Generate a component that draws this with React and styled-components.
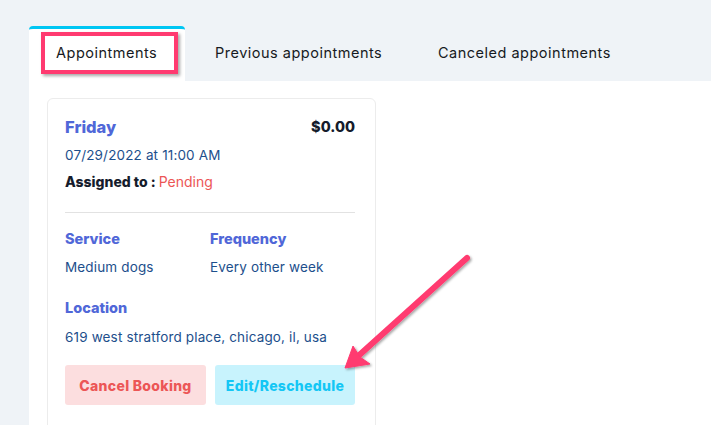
import React from 'react';
import styled, { createGlobalStyle } from 'styled-components';

const GlobalStyle = createGlobalStyle`
  html, body {
    margin: 0;
    padding: 0;
    background: #eff3f7;
    font-family: 'Inter', 'Open Sans', sans-serif;
  }
`;

const Page = styled.div`
  position: relative;
  width: 711px;
  height: 425px;
  overflow: hidden;
  padding: 26px 0 0 29px;
  box-sizing: border-box;
`;

const TabBar = styled.div`
  display: flex;
  height: 55px;
`;

const Tab = styled.div`
  box-sizing: border-box;
  width: ${(p) => p.$width || 'auto'};
  padding-left: ${(p) => p.$pl || 27}px;
  padding-bottom: 6px;
  display: flex;
  align-items: center;
  font-size: 14.5px;
  letter-spacing: 0.5px;
  color: #161a22;
  background: ${(p) => (p.$active ? '#fff' : 'transparent')};
  border-top: 3px solid ${(p) => (p.$active ? '#00c6f3' : 'transparent')};
  border-radius: 4px 4px 0 0;
`;

const Highlight = styled.div`
  position: absolute;
  left: 41px;
  top: 32px;
  width: 137px;
  height: 42px;
  box-sizing: border-box;
  border: 4px solid #ff3a70;
  box-shadow: 2px 2px 3px rgba(0, 0, 0, 0.35);
`;

const Panel = styled.div`
  background: #fff;
  height: 100%;
  padding: 17px 18px 0;
  box-sizing: border-box;
`;

const Card = styled.div`
  width: 329px;
  height: 340px;
  box-sizing: border-box;
  border: 1px solid #ececec;
  border-radius: 6px;
  padding: 18px 20px 0 17px;
`;

const HeadRow = styled.div`
  display: flex;
  justify-content: space-between;
  align-items: center;
  line-height: 20px;
`;

const Day = styled.div`
  font-size: 16.5px;
  font-weight: 800;
  color: #5067d8;
`;

const Price = styled.div`
  font-size: 14.5px;
  font-weight: 800;
  color: #151c2c;
`;

const Text = styled.div`
  font-size: 13.5px;
  line-height: 20px;
  letter-spacing: 0.15px;
  color: #1d4f8c;
  margin-top: ${(p) => p.$mt || 0}px;
`;

const Assigned = styled.div`
  font-size: 14px;
  line-height: 20px;
  margin-top: 7px;
  color: #151c2c;
  font-weight: 800;
  span {
    font-weight: 400;
    color: #ec5656;
  }
`;

const Divider = styled.div`
  height: 1px;
  background: #e2e2e2;
  margin-top: 20px;
`;

const Grid = styled.div`
  display: grid;
  grid-template-columns: 145px 1fr;
  margin-top: ${(p) => p.$mt || 0}px;
`;

const Label = styled.div`
  font-size: 14.5px;
  font-weight: 800;
  line-height: 20px;
  color: #5067d8;
  margin-top: ${(p) => p.$mt || 0}px;
`;

const Buttons = styled.div`
  display: grid;
  grid-template-columns: 141px 140px;
  gap: 9px;
  margin-top: 18px;
`;

const Button = styled.button`
  height: 40px;
  border: none;
  border-radius: 3px;
  font-family: inherit;
  font-size: 14px;
  font-weight: 800;
  letter-spacing: 0.3px;
  background: ${(p) => (p.$danger ? '#fcdedf' : '#c8f3fd')};
  color: ${(p) => (p.$danger ? '#ec5656' : '#14c7f5')};
  padding: 0;
`;

const Overlay = styled.svg`
  position: absolute;
  left: 0;
  top: 0;
  pointer-events: none;
`;

export default function App() {
  return (
    <>
      <GlobalStyle />
      <Page>
        <TabBar>
          <Tab $active $width="156px">Appointments</Tab>
          <Tab $width="226px" $pl={30}>Previous appointments</Tab>
          <Tab>Canceled appointments</Tab>
        </TabBar>
        <Panel>
          <Card>
            <HeadRow>
              <Day>Friday</Day>
              <Price>$0.00</Price>
            </HeadRow>
            <Text $mt={8}>07/29/2022 at 11:00 AM</Text>
            <Assigned>
              Assigned to : <span>Pending</span>
            </Assigned>
            <Divider />
            <Grid $mt={16}>
              <Label>Service</Label>
              <Label>Frequency</Label>
              <Text $mt={8}>Medium dogs</Text>
              <Text $mt={8}>Every other week</Text>
            </Grid>
            <Label $mt={21}>Location</Label>
            <Text $mt={9}>619 west stratford place, chicago, il, usa</Text>
            <Buttons>
              <Button $danger>Cancel Booking</Button>
              <Button>Edit/Reschedule</Button>
            </Buttons>
          </Card>
        </Panel>
        <Highlight />
        <Overlay width="711" height="425" viewBox="0 0 711 425">
          <defs>
            <filter id="sh" x="-20%" y="-20%" width="140%" height="140%">
              <feDropShadow dx="1.5" dy="1.5" stdDeviation="1" floodColor="#000" floodOpacity="0.35" />
            </filter>
          </defs>
          <g filter="url(#sh)" fill="#ff3a70" stroke="#ff3a70">
            <line x1="467" y1="258" x2="356" y2="358" strokeWidth="6" strokeLinecap="round" />
            <polygon points="345,368 353,346 360,357 370,364" strokeWidth="1" strokeLinejoin="round" />
          </g>
        </Overlay>
      </Page>
    </>
  );
}
